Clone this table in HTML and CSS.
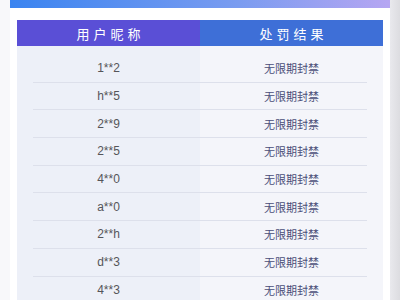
FILE: index.html
```html
<!DOCTYPE html>
<html lang="zh">
<head>
<meta charset="utf-8">
<link rel="stylesheet" href="styles.css">
</head>
<body>
<div class="page">
  <div class="banner"></div>
  <div class="card">
    <div class="table">
      <div class="head">
        <div class="th th-user">用户昵称</div>
        <div class="th th-result">处罚结果</div>
      </div>
      <div class="tbody">
        <div class="row"><div class="name">1**2</div><div class="result">无限期封禁</div></div>
        <div class="row"><div class="name">h**5</div><div class="result">无限期封禁</div></div>
        <div class="row"><div class="name">2**9</div><div class="result">无限期封禁</div></div>
        <div class="row"><div class="name">2**5</div><div class="result">无限期封禁</div></div>
        <div class="row"><div class="name">4**0</div><div class="result">无限期封禁</div></div>
        <div class="row"><div class="name">a**0</div><div class="result">无限期封禁</div></div>
        <div class="row"><div class="name">2**h</div><div class="result">无限期封禁</div></div>
        <div class="row"><div class="name">d**3</div><div class="result">无限期封禁</div></div>
        <div class="row"><div class="name">4**3</div><div class="result">无限期封禁</div></div>
      </div>
    </div>
  </div>
</div>
</body>
</html>
```
FILE: styles.css
```css
html, body {
  margin: 0;
  padding: 0;
  height: 300px;
  overflow: hidden;
}
body {
  background: linear-gradient(to right, #f8f8fa 0, #f8f8fa 10px, #ffffff 10px, #ffffff 390px, #e9e9ed 390px, #dcdce0 400px);
  font-family: "Liberation Sans", Arial, "Noto Sans CJK SC", sans-serif;
}
.page {
  width: 380px;
  margin: 0 10px;
}
.banner {
  height: 8px;
  background: linear-gradient(to right, #3a84f0, #7a9cf0 60%, #b6a6f2);
}
.card {
  background: #ffffff;
  padding: 12px 7px 0;
}
.head {
  display: grid;
  grid-template-columns: 1fr 1fr;
  height: 26px;
}
.th {
  display: flex;
  align-items: center;
  justify-content: center;
  color: #ffffff;
  font-family: "Noto Sans CJK SC", sans-serif;
  font-size: 13px;
  letter-spacing: 4px;
  text-indent: 4px;
}
.th-user { background: #5a4fd6; }
.th-result { background: #3e6fd7; }
.tbody {
  padding-top: 9px;
  background: linear-gradient(to right, #edf0f8 50%, #f4f5fa 50%);
}
.row {
  display: grid;
  grid-template-columns: 1fr 1fr;
  height: 26.7px;
  border-bottom: 1px solid transparent;
  background: linear-gradient(#dde0eb, #dde0eb) no-repeat center bottom / calc(100% - 32px) 1px;
  background-origin: border-box;
  background-clip: border-box;
}
.name, .result {
  display: flex;
  align-items: center;
  justify-content: center;
}
.name {
  color: #555559;
  font-size: 12px;
}
.result {
  color: #4a4e78;
  font-family: "Noto Sans CJK SC", sans-serif;
  font-size: 11px;
}
```
